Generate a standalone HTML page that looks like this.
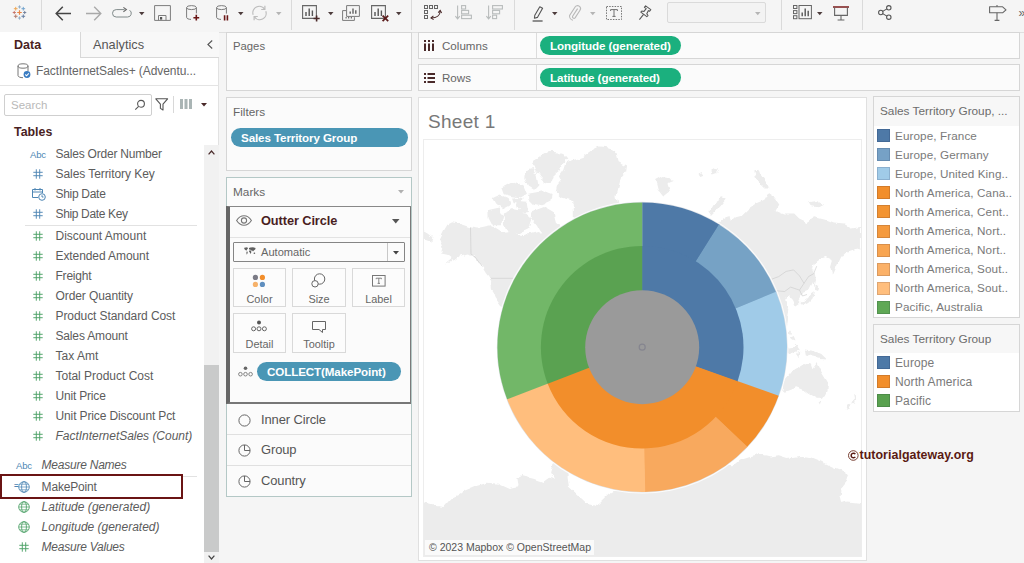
<!DOCTYPE html>
<html>
<head>
<meta charset="utf-8">
<title>Tableau - Sheet 1</title>
<style>
*{box-sizing:border-box;margin:0;padding:0}
html,body{width:1024px;height:563px;overflow:hidden}
body{font-family:"Liberation Sans",sans-serif;background:#f5f5f5;color:#555;font-size:12px;position:relative}
.abs{position:absolute}
.t{position:absolute;white-space:nowrap;line-height:1}
/* toolbar */
#toolbar{left:0;top:0;width:1024px;height:33px;background:#f5f5f5;border-bottom:1px solid #dfdfdf}
.vsep{position:absolute;top:0;width:1px;height:30px;background:#dadada}
/* left panel */
#left{left:0;top:32px;width:219px;height:531px;background:#fff;border-right:1px solid #e2e2e2}
.card{position:absolute;background:#fbfbfb;border:1px solid #d6d6d6}
.f{position:absolute;white-space:nowrap;font-size:12px;color:#5c5c5c;line-height:14px;letter-spacing:-0.1px}
.fi{font-style:italic}
.pill{position:absolute;border-radius:10px;color:#fff;font-weight:bold;font-size:12px;line-height:18px;white-space:nowrap;padding-left:11px;letter-spacing:-0.1px}
.lg{position:absolute;white-space:nowrap;font-size:11.7px;color:#7a7a7a;line-height:14px;letter-spacing:0.1px}
.sw{position:absolute;width:13px;height:13px;box-shadow:inset 0 0 0 1px rgba(0,0,40,0.13)}
svg{position:absolute;overflow:visible}
</style>
</head>
<body>

<!-- ================= TOOLBAR ================= -->
<div id="toolbar" class="abs">
  <div class="vsep" style="left:41px"></div>
  <div class="vsep" style="left:291px"></div>
  <div class="vsep" style="left:411px"></div>
  <div class="vsep" style="left:514px"></div>
  <div class="vsep" style="left:781px"></div>
  <div class="vsep" style="left:862px"></div>
</div>
<!--TOOLBAR-ICONS-->
<svg style="left:11.5px;top:5.2px;opacity:0.88" width="15" height="15" viewBox="0 0 17 17" fill="none"><path d="M5.9 8.5H11.1M8.5 5.9V11.1" stroke="#e8762c" stroke-width="1.4"/><path d="M6.7 2.2H10.3M8.5 0.40000000000000013V4.0" stroke="#7b9fbf" stroke-width="1.0"/><path d="M6.7 14.8H10.3M8.5 13.0V16.6" stroke="#7b9fbf" stroke-width="1.0"/><path d="M0.8 8.5H4.4M2.6 6.7V10.3" stroke="#c05a4a" stroke-width="1.0"/><path d="M12.6 8.5H16.2M14.4 6.7V10.3" stroke="#5a6b8a" stroke-width="1.0"/><path d="M2.1 4.2H6.300000000000001M4.2 2.1V6.300000000000001" stroke="#eb9b3c" stroke-width="1.1"/><path d="M10.700000000000001 4.2H14.9M12.8 2.1V6.300000000000001" stroke="#5c95c6" stroke-width="1.1"/><path d="M2.1 12.8H6.300000000000001M4.2 10.700000000000001V14.9" stroke="#a96b5a" stroke-width="1.1"/><path d="M10.700000000000001 12.8H14.9M12.8 10.700000000000001V14.9" stroke="#4d6a94" stroke-width="1.1"/></svg>
<svg style="left:55px;top:5.5px" width="16" height="15" viewBox="0 0 16 15" fill="none" stroke="#444" stroke-width="1.5"><path d="M16 7.5H1.2M7.8 0.8L1.2 7.5L7.8 14.2"/></svg>
<svg style="left:85.5px;top:5.5px" width="16" height="15" viewBox="0 0 16 15" fill="none" stroke="#a9a9a9" stroke-width="1.4"><path d="M0 7.5H14.8M8.2 0.8L14.8 7.5L8.2 14.2"/></svg>
<svg style="left:112px;top:6.5px" width="20" height="11" viewBox="0 0 20 11" fill="none" stroke="#808a8a" stroke-width="1"><path d="M12.6 2.6H4.2A3.7 3.7 0 0 0 4.2 10H15.6A3.7 3.7 0 0 0 17.6 3.2"/><path d="M11.4 0.4L14.4 2.6L11.4 4.8" stroke="#666" stroke-width="1.1"/></svg>
<svg style="left:138.95px;top:11.6px" width="5.5" height="3.2" viewBox="0 0 5.5 3.2"><path d="M0 0H5.5L2.75 3.2Z" fill="#4d3c3c"/></svg>
<svg style="left:154px;top:5px" width="17" height="16" viewBox="0 0 17 16" fill="none" stroke="#7d7d7d" stroke-width="1"><path d="M0.6 0.6H16.4V15.4H0.6Z"/><path d="M4.5 15.4V10.5H12V15.4"/><rect x="6" y="12" width="2.2" height="2.6" fill="#555" stroke="none"/></svg>
<svg style="left:186px;top:5px" width="14" height="16" viewBox="0 0 14 16" fill="none" stroke="#7d7d7d" stroke-width="1"><ellipse cx="5.5" cy="2.6" rx="4.9" ry="2"/><path d="M0.6 2.6V12.4C0.6 13.5 2.6 14.4 5 14.4M10.4 2.6V8.4"/><path d="M10.3 9.8V15.6M7.4 12.7H13.2" stroke="#6a1616" stroke-width="1.6"/></svg>
<svg style="left:215.5px;top:5px" width="13" height="16" viewBox="0 0 13 16" fill="none" stroke="#7d7d7d" stroke-width="1"><ellipse cx="5.5" cy="2.6" rx="4.9" ry="2"/><path d="M0.6 2.6V12.4C0.6 13.5 2.6 14.4 5 14.4M10.4 2.6V8.6"/><path d="M8.6 10.2V15.6M11.4 10.2V15.6" stroke="#6a1616" stroke-width="1.6"/></svg>
<svg style="left:237.95px;top:11.6px" width="5.5" height="3.2" viewBox="0 0 5.5 3.2"><path d="M0 0H5.5L2.75 3.2Z" fill="#4d3c3c"/></svg>
<svg style="left:250.5px;top:4.5px" width="17" height="16" viewBox="0 0 17 16" fill="none" stroke="#bdbdbd" stroke-width="1.2"><path d="M2.2 9.8A6.4 6.4 0 0 1 13.6 4.2"/><path d="M14.8 6.2A6.4 6.4 0 0 1 3.4 11.8"/><path d="M13.9 0.8V4.5H10.2" /><path d="M3.1 15.2V11.5H6.8"/></svg>
<svg style="left:276.25px;top:11.6px" width="5.5" height="3.2" viewBox="0 0 5.5 3.2"><path d="M0 0H5.5L2.75 3.2Z" fill="#b5b5b5"/></svg>
<svg style="left:301.5px;top:4.5px" width="19" height="17" viewBox="0 0 19 17" fill="none" stroke="#666" stroke-width="1.1"><path d="M0.6 0.6H14.4V13.4H0.6Z"/><path d="M4 11V7M7.2 11V3.4M10.4 11V5.6" stroke="#555" stroke-width="1.4"/><path d="M14.6 10.4V16.6M11.5 13.5H17.7" stroke="#4a2a2a" stroke-width="1.6"/></svg>
<svg style="left:327.75px;top:11.6px" width="5.5" height="3.2" viewBox="0 0 5.5 3.2"><path d="M0 0H5.5L2.75 3.2Z" fill="#4d3c3c"/></svg>
<svg style="left:342px;top:4.5px" width="18" height="17" viewBox="0 0 18 17" fill="none" stroke="#7a7a7a" stroke-width="1"><path d="M4.4 5.6H0.6V15.4H12.4V12.2"/><path d="M3.6 12.8H4.6M6.2 12.8H7.2M8.8 12.8H9.8" stroke="#555" stroke-width="1.6"/><path d="M4.6 0.6H17.4V11.4H4.6Z" fill="#f5f5f5"/><path d="M8.2 8.8V6.4M11 8.8V3.6M13.8 8.8V5.2" stroke="#555" stroke-width="1.3"/></svg>
<svg style="left:371px;top:4.5px" width="19" height="17" viewBox="0 0 19 17" fill="none" stroke="#666" stroke-width="1.1"><path d="M0.6 0.6H14.4V13.4H0.6Z"/><path d="M4 11V7M7.2 11V3.4M10.4 11V5.6" stroke="#555" stroke-width="1.4"/><path d="M11.6 10.6L17.2 16.2M17.2 10.6L11.6 16.2" stroke="#5a1a1a" stroke-width="1.7"/></svg>
<svg style="left:396.25px;top:11.6px" width="5.5" height="3.2" viewBox="0 0 5.5 3.2"><path d="M0 0H5.5L2.75 3.2Z" fill="#4d3c3c"/></svg>
<svg style="left:424px;top:5px" width="18" height="15" viewBox="0 0 18 15" fill="none" stroke="#666" stroke-width="1"><rect x="0.5" y="0.5" width="3" height="3"/><rect x="5.5" y="0.5" width="3" height="3"/><rect x="10.5" y="0.5" width="3" height="3"/><rect x="0.5" y="5.5" width="3" height="3"/><rect x="0.5" y="10.5" width="3" height="3"/><path d="M16.2 5.8C16.2 10.5 12.5 13 7.4 13" stroke="#4a2a2a" stroke-width="1.1"/><path d="M14.2 7.6L16.2 5.4L17.6 8M9.4 10.9L7 13L9.6 14.6" stroke="#4a2a2a" stroke-width="1.1"/></svg>
<svg style="left:455px;top:5px" width="17" height="15" viewBox="0 0 17 15" fill="none" stroke="#b8bcbc" stroke-width="1.1"><path d="M2.6 0.6V13.6M0.4 11.2L2.6 13.8L4.8 11.2"/><rect x="6.6" y="0.6" width="4" height="3.4"/><rect x="6.6" y="5.4" width="7" height="3.4"/><rect x="6.6" y="10.2" width="9.8" height="3.4"/></svg>
<svg style="left:485.5px;top:5px" width="17" height="15" viewBox="0 0 17 15" fill="none" stroke="#b8bcbc" stroke-width="1.1"><path d="M2.6 0.6V13.6M0.4 11.2L2.6 13.8L4.8 11.2"/><rect x="6.6" y="0.6" width="9.8" height="3.4"/><rect x="6.6" y="5.4" width="7" height="3.4"/><rect x="6.6" y="10.2" width="4" height="3.4"/></svg>
<svg style="left:532px;top:5.5px" width="12" height="16" viewBox="0 0 12 16" fill="none" stroke="#555" stroke-width="1.1"><path d="M7.8 0.8L10.6 2.2L5.4 11.4L2.4 12.2L2.8 9.2Z" stroke-linejoin="round"/><path d="M0.6 15H10.6" stroke-width="1.3"/></svg>
<svg style="left:551.75px;top:11.6px" width="5.5" height="3.2" viewBox="0 0 5.5 3.2"><path d="M0 0H5.5L2.75 3.2Z" fill="#4d3c3c"/></svg>
<svg style="left:568px;top:5px" width="13" height="16" viewBox="0 0 13 16" fill="none" stroke="#b8b8b8" stroke-width="1.1"><path d="M9.6 3.6L4.6 11.2A1.5 1.5 0 0 0 7.1 12.8L12 5.2A2.9 2.9 0 0 0 7.1 2L1.6 10.4A4.2 4.2 0 0 0 5 15.2"/></svg>
<svg style="left:589.75px;top:11.6px" width="5.5" height="3.2" viewBox="0 0 5.5 3.2"><path d="M0 0H5.5L2.75 3.2Z" fill="#b5b5b5"/></svg>
<svg style="left:606px;top:5.5px" width="16" height="14" viewBox="0 0 16 14" fill="none" stroke="#777" stroke-width="1"><rect x="0.5" y="0.5" width="15" height="13" stroke-dasharray="1.5 1.2"/><path d="M4.6 3.6H11.4M4.6 3.6V5M11.4 3.6V5M8 3.6V10.4M6.4 10.4H9.6" stroke="#707070" stroke-width="1"/></svg>
<svg style="left:637.5px;top:5px" width="14" height="16" viewBox="0 0 14 16" fill="none" stroke="#555" stroke-width="1.05" stroke-linejoin="round"><path d="M7.6 0.8L12.8 4.6L11.6 6.2L10.4 5.6L8.8 8.8L10 10.6L8.8 11.6L2.8 7.2L3.8 6L6 6.4L8.2 3.6L6.4 2.4Z"/><path d="M5.6 9.4L1.4 14.6"/></svg>
<div class="abs" style="left:667px;top:2px;width:99px;height:21px;background:#f3f3f3;border:1px solid #dadada;border-radius:2px"></div>
<svg style="left:754.95px;top:11.6px" width="5.5" height="3.2" viewBox="0 0 5.5 3.2"><path d="M0 0H5.5L2.75 3.2Z" fill="#b5b5b5"/></svg>
<svg style="left:793px;top:5px" width="19" height="15" viewBox="0 0 19 15" fill="none" stroke="#666" stroke-width="1"><rect x="0.5" y="0.5" width="3.4" height="3"/><rect x="0.5" y="5.6" width="3.4" height="3"/><rect x="0.5" y="10.7" width="3.4" height="3"/><rect x="6" y="0.5" width="12.4" height="13.2"/><path d="M9.2 11.2V7.6M12.2 11.2V3.4M15.2 11.2V5.8" stroke="#555" stroke-width="1.4"/></svg>
<svg style="left:816.95px;top:11.6px" width="5.5" height="3.2" viewBox="0 0 5.5 3.2"><path d="M0 0H5.5L2.75 3.2Z" fill="#4d3c3c"/></svg>
<svg style="left:833px;top:5.5px" width="16" height="15" viewBox="0 0 16 15" fill="none" stroke="#666" stroke-width="1.1"><path d="M0 1H16" stroke="#7a1a1a" stroke-width="1.5"/><path d="M1.6 1.6V9.4H14.4V1.6"/><path d="M8 9.4V13.6M4.6 14H11.4"/></svg>
<svg style="left:878px;top:5px" width="14" height="15" viewBox="0 0 14 15" fill="none" stroke="#555" stroke-width="1.1"><circle cx="10.8" cy="2.8" r="2.2"/><circle cx="2.8" cy="7.5" r="2.2"/><circle cx="10.8" cy="12.2" r="2.2"/><path d="M4.7 6.4L8.9 3.9M4.7 8.6L8.9 11.1"/></svg>
<svg style="left:989px;top:5px" width="18" height="16" viewBox="0 0 18 16" fill="none" stroke="#666" stroke-width="1.1"><path d="M0.6 1.8H13.6L17 4.8L13.6 7.8H0.6Z" stroke-linejoin="round"/><path d="M8 0V1.8M8 7.8V15M5.6 15.4H10.4"/></svg>
<div class="t" style="left:1018.5px;top:7px;font-size:12px;color:#666">»</div>
<!--/TOOLBAR-ICONS-->

<!-- ================= LEFT DATA PANEL ================= -->
<div id="left" class="abs"></div>
<!--LEFT-CONTENT-->
<div class="abs" style="left:80px;top:32px;width:139px;height:26px;background:#f8f8f8;border-left:1px solid #d8d8d8;border-bottom:1px solid #d8d8d8"></div>
<div class="t" style="left:14px;top:39px;font-size:12.5px;font-weight:bold;color:#4a1f1f">Data</div>
<div class="t" style="left:93px;top:39px;font-size:12.75px;color:#555">Analytics</div>
<svg style="left:206.5px;top:40px" width="6" height="9" viewBox="0 0 6 9" fill="none" stroke="#555" stroke-width="1.1"><path d="M5.2 0.5L0.9 4.5L5.2 8.5"/></svg>
<svg style="left:17px;top:63px" width="14" height="16" viewBox="0 0 14 16" fill="none" stroke="#777" stroke-width="1"><ellipse cx="6" cy="3" rx="5" ry="2.2"/><path d="M1 3V12.5C1 13.8 3.2 14.7 6 14.7M11 3V8"/><circle cx="10" cy="11.5" r="3.4" fill="#3a7cc2" stroke="none"/><path d="M8.3 11.5L9.6 12.8L11.8 10.3" stroke="#fff" stroke-width="1.1"/></svg>
<div class="t" style="left:36px;top:65px;font-size:12px;color:#666;letter-spacing:-0.08px">FactInternetSales+ (Adventu...</div>
<div class="abs" style="left:0;top:85px;width:219px;height:1px;background:#e4e4e4"></div>
<div class="abs" style="left:4px;top:94px;width:148px;height:22px;background:#fff;border:1px solid #cfcfcf;border-radius:2px"></div>
<div class="t" style="left:11px;top:100px;font-size:11.5px;color:#b9b9b9">Search</div>
<svg style="left:134px;top:99px" width="12" height="12" viewBox="0 0 12 12" fill="none" stroke="#555" stroke-width="1.1"><circle cx="7" cy="4.8" r="3.4"/><path d="M4.6 7.3L1.3 10.6"/></svg>
<svg style="left:155px;top:98px" width="14" height="13" viewBox="0 0 14 13" fill="none" stroke="#555" stroke-width="1.1"><path d="M0.8 0.8H12.6L8 6.2V12L5.4 10.4V6.2Z" stroke-linejoin="round"/></svg>
<div class="abs" style="left:173px;top:96px;width:1px;height:17px;background:#d8d8d8"></div>
<svg style="left:180px;top:99px" width="12" height="10" viewBox="0 0 12 10" fill="#aab5b5" stroke="none"><rect x="0" y="0" width="3" height="10"/><rect x="4.5" y="0" width="3" height="10"/><rect x="9" y="0" width="3" height="10"/></svg>
<svg style="left:200.5px;top:102.5px" width="6" height="4" viewBox="0 0 6 4"><path d="M0 0H6L3 3.6Z" fill="#4a2a2a"/></svg>
<div class="t" style="left:14px;top:126px;font-size:12.4px;font-weight:bold;color:#4a1f1f">Tables</div>
<div class="t" style="left:30px;top:149.5px;font-size:9.5px;color:#4e86b4;letter-spacing:-0.2px">Abc</div>
<div class="f" style="left:55.5px;top:147px;letter-spacing:-0.211px">Sales Order Number</div>
<svg style="left:33px;top:169px" width="10" height="10" viewBox="0 0 10 10" fill="none" stroke="#4e86b4" stroke-width="0.95"><path d="M3.3 0.3V9.7M6.7 0.3V9.7M0.3 3.3H9.7M0.3 6.7H9.7"/></svg>
<div class="f" style="left:55.5px;top:167px;letter-spacing:-0.068px">Sales Territory Key</div>
<svg style="left:31.5px;top:188px" width="14" height="13" viewBox="0 0 14 13" fill="none" stroke="#4e86b4" stroke-width="1"><path d="M6 9.5H0.5V1.5H10.5V5"/><path d="M0.5 4H10.5M3 0V2.5M8 0V2.5"/><circle cx="10" cy="9" r="3.3" fill="#fff"/><path d="M10 7.2V9H11.5"/></svg>
<div class="f" style="left:55.5px;top:187px;letter-spacing:-0.3px">Ship Date</div>
<svg style="left:33px;top:209px" width="10" height="10" viewBox="0 0 10 10" fill="none" stroke="#4e86b4" stroke-width="0.95"><path d="M3.3 0.3V9.7M6.7 0.3V9.7M0.3 3.3H9.7M0.3 6.7H9.7"/></svg>
<div class="f" style="left:55.5px;top:207px;letter-spacing:-0.346px">Ship Date Key</div>
<svg style="left:33px;top:231px" width="10" height="10" viewBox="0 0 10 10" fill="none" stroke="#4da167" stroke-width="0.95"><path d="M3.3 0.3V9.7M6.7 0.3V9.7M0.3 3.3H9.7M0.3 6.7H9.7"/></svg>
<div class="f" style="left:55.5px;top:229px;letter-spacing:0.0px">Discount Amount</div>
<svg style="left:33px;top:251px" width="10" height="10" viewBox="0 0 10 10" fill="none" stroke="#4da167" stroke-width="0.95"><path d="M3.3 0.3V9.7M6.7 0.3V9.7M0.3 3.3H9.7M0.3 6.7H9.7"/></svg>
<div class="f" style="left:55.5px;top:249px;letter-spacing:-0.087px">Extended Amount</div>
<svg style="left:33px;top:271px" width="10" height="10" viewBox="0 0 10 10" fill="none" stroke="#4da167" stroke-width="0.95"><path d="M3.3 0.3V9.7M6.7 0.3V9.7M0.3 3.3H9.7M0.3 6.7H9.7"/></svg>
<div class="f" style="left:55.5px;top:269px;letter-spacing:-0.214px">Freight</div>
<svg style="left:33px;top:291px" width="10" height="10" viewBox="0 0 10 10" fill="none" stroke="#4da167" stroke-width="0.95"><path d="M3.3 0.3V9.7M6.7 0.3V9.7M0.3 3.3H9.7M0.3 6.7H9.7"/></svg>
<div class="f" style="left:55.5px;top:289px;letter-spacing:-0.086px">Order Quantity</div>
<svg style="left:33px;top:311px" width="10" height="10" viewBox="0 0 10 10" fill="none" stroke="#4da167" stroke-width="0.95"><path d="M3.3 0.3V9.7M6.7 0.3V9.7M0.3 3.3H9.7M0.3 6.7H9.7"/></svg>
<div class="f" style="left:55.5px;top:309px;letter-spacing:-0.076px">Product Standard Cost</div>
<svg style="left:33px;top:331px" width="10" height="10" viewBox="0 0 10 10" fill="none" stroke="#4da167" stroke-width="0.95"><path d="M3.3 0.3V9.7M6.7 0.3V9.7M0.3 3.3H9.7M0.3 6.7H9.7"/></svg>
<div class="f" style="left:55.5px;top:329px;letter-spacing:-0.158px">Sales Amount</div>
<svg style="left:33px;top:351px" width="10" height="10" viewBox="0 0 10 10" fill="none" stroke="#4da167" stroke-width="0.95"><path d="M3.3 0.3V9.7M6.7 0.3V9.7M0.3 3.3H9.7M0.3 6.7H9.7"/></svg>
<div class="f" style="left:55.5px;top:349px;letter-spacing:0.043px">Tax Amt</div>
<svg style="left:33px;top:371px" width="10" height="10" viewBox="0 0 10 10" fill="none" stroke="#4da167" stroke-width="0.95"><path d="M3.3 0.3V9.7M6.7 0.3V9.7M0.3 3.3H9.7M0.3 6.7H9.7"/></svg>
<div class="f" style="left:55.5px;top:369px;letter-spacing:-0.017px">Total Product Cost</div>
<svg style="left:33px;top:391px" width="10" height="10" viewBox="0 0 10 10" fill="none" stroke="#4da167" stroke-width="0.95"><path d="M3.3 0.3V9.7M6.7 0.3V9.7M0.3 3.3H9.7M0.3 6.7H9.7"/></svg>
<div class="f" style="left:55.5px;top:389px;letter-spacing:-0.19px">Unit Price</div>
<svg style="left:33px;top:411px" width="10" height="10" viewBox="0 0 10 10" fill="none" stroke="#4da167" stroke-width="0.95"><path d="M3.3 0.3V9.7M6.7 0.3V9.7M0.3 3.3H9.7M0.3 6.7H9.7"/></svg>
<div class="f" style="left:55.5px;top:409px;letter-spacing:-0.126px">Unit Price Discount Pct</div>
<svg style="left:33px;top:431px" width="10" height="10" viewBox="0 0 10 10" fill="none" stroke="#4da167" stroke-width="0.95"><path d="M3.3 0.3V9.7M6.7 0.3V9.7M0.3 3.3H9.7M0.3 6.7H9.7"/></svg>
<div class="f fi" style="left:55.5px;top:429px;letter-spacing:-0.028px">FactInternetSales (Count)</div>
<div class="abs" style="left:25px;top:225px;width:172px;height:1px;background:#e2e2e2"></div>
<div class="t" style="left:16px;top:460.5px;font-size:9.5px;color:#4e86b4;letter-spacing:-0.2px">Abc</div>
<div class="f fi" style="left:41.6px;top:458px;letter-spacing:-0.238px">Measure Names</div>
<div class="abs" style="left:183px;top:476px;width:14px;height:1px;background:#e2e2e2"></div>
<div class="abs" style="left:0px;top:474px;width:183px;height:25px;border:2px solid #6a1414;background:#fff"></div>
<div class="t" style="left:14px;top:482px;font-size:8px;color:#4e86b4;font-weight:bold">=</div>
<svg style="left:18px;top:481px" width="12" height="12" viewBox="0 0 12 12" fill="none" stroke="#4e86b4" stroke-width="0.85"><circle cx="6" cy="6" r="5.3"/><ellipse cx="6" cy="6" rx="2.4" ry="5.3"/><path d="M0.7 6H11.3M1.7 3.2H10.3M1.7 8.8H10.3" stroke-width="0.7"/></svg>
<div class="f" style="left:41.6px;top:480px;letter-spacing:-0.189px">MakePoint</div>
<svg style="left:18px;top:501px" width="12" height="12" viewBox="0 0 12 12" fill="none" stroke="#4da167" stroke-width="0.85"><circle cx="6" cy="6" r="5.3"/><ellipse cx="6" cy="6" rx="2.4" ry="5.3"/><path d="M0.7 6H11.3M1.7 3.2H10.3M1.7 8.8H10.3" stroke-width="0.7"/></svg>
<div class="f fi" style="left:41.6px;top:500px;letter-spacing:0.025px">Latitude (generated)</div>
<svg style="left:18px;top:521px" width="12" height="12" viewBox="0 0 12 12" fill="none" stroke="#4da167" stroke-width="0.85"><circle cx="6" cy="6" r="5.3"/><ellipse cx="6" cy="6" rx="2.4" ry="5.3"/><path d="M0.7 6H11.3M1.7 3.2H10.3M1.7 8.8H10.3" stroke-width="0.7"/></svg>
<div class="f fi" style="left:41.6px;top:520px;letter-spacing:-0.01px">Longitude (generated)</div>
<svg style="left:19px;top:542px" width="10" height="10" viewBox="0 0 10 10" fill="none" stroke="#4da167" stroke-width="0.95"><path d="M3.3 0.3V9.7M6.7 0.3V9.7M0.3 3.3H9.7M0.3 6.7H9.7"/></svg>
<div class="f fi" style="left:41.6px;top:540px;letter-spacing:-0.236px">Measure Values</div>
<div class="abs" style="left:204px;top:145px;width:15px;height:418px;background:#f1f1f1"></div>
<div class="abs" style="left:204px;top:365px;width:15px;height:187px;background:#c9caca"></div>
<svg style="left:208px;top:150px" width="7" height="5" viewBox="0 0 7 5" fill="none" stroke="#4a2a2a" stroke-width="1.2"><path d="M0.6 4.4L3.5 1L6.4 4.4"/></svg>
<svg style="left:208px;top:555px" width="7" height="5" viewBox="0 0 7 5" fill="none" stroke="#444" stroke-width="1.2"><path d="M0.6 0.6L3.5 4L6.4 0.6"/></svg>
<!--/LEFT-CONTENT-->

<!-- ================= MIDDLE CARDS ================= -->
<!--MIDDLE-CONTENT-->
<div class="card" style="left:226px;top:32px;width:186px;height:59px"></div>
<div class="t" style="left:233px;top:41px;font-size:11.3px;color:#666">Pages</div>
<div class="card" style="left:226px;top:97px;width:186px;height:74px"></div>
<div class="t" style="left:233px;top:106.6px;font-size:11.8px;color:#666">Filters</div>
<div class="pill" style="left:231px;top:128px;width:177px;height:19px;background:#4a96b5;padding-left:10px;line-height:19px;font-size:11.6px">Sales Territory Group</div>
<div class="card" style="left:226px;top:177px;width:186px;height:320px;border-color:#b4c8c6"></div>
<div class="t" style="left:233px;top:186.6px;font-size:11.8px;color:#666">Marks</div>
<svg style="left:398px;top:189.5px" width="6" height="3.6" viewBox="0 0 6 3.6"><path d="M0 0H6L3 3.6Z" fill="#b0b0b0"/></svg>
<div class="abs" style="left:226px;top:206px;width:185px;height:198px;background:#fbfbfb;border:1px solid #7a7a7a;border-left:4px solid #666;border-top:1.5px solid #888;border-bottom:2px solid #777"></div>
<svg style="left:236px;top:215px" width="16" height="11" viewBox="0 0 16 11" fill="none" stroke="#777" stroke-width="1.1"><path d="M0.6 5.5C3 1.8 5.5 0.8 8 0.8S13 1.8 15.4 5.5C13 9.2 10.5 10.2 8 10.2S3 9.2 0.6 5.5Z"/><circle cx="8" cy="5.5" r="2.6"/></svg>
<div class="t" style="left:261px;top:215px;font-size:12.8px;font-weight:bold;color:#4a1f1f;letter-spacing:-0.1px">Outter Circle</div>
<svg style="left:392px;top:218.5px" width="7.5" height="4.6" viewBox="0 0 7.5 4.6"><path d="M0 0H7.5L3.75 4.6Z" fill="#555"/></svg>
<div class="abs" style="left:230px;top:237px;width:180px;height:1px;background:#e3e3e3"></div>
<div class="abs" style="left:233px;top:242px;width:172px;height:20px;background:#fbfbfb;border:1px solid #858585;border-radius:1px"></div>
<div class="abs" style="left:387px;top:243px;width:1px;height:18px;background:#c8c8c8"></div>
<svg style="left:243.5px;top:247px" width="12" height="9" viewBox="0 0 12 9" fill="#5f5f5f"><path d="M0.3 0.8L3.2 0.3L4 1.4L3 2.6L2.4 3.8L1.4 3L0.3 2Z"/><path d="M2.6 4.4L3.8 4.8L3.4 6.6L2.8 7.8L2.4 6Z"/><path d="M5 1L6.4 0.4L9 0.3L11.6 0.9L11.2 2.6L9.8 3.4L9 4.6L8.2 3.4L7 3.4L6.2 2.6L5 2.6Z"/><path d="M5.2 3.4L6.8 3.6L7.4 5L6.6 7L5.8 5.6L5 4.6Z"/><path d="M9.6 5.8L11 5.6L11.2 6.8L9.8 7Z"/></svg>
<div class="t" style="left:261px;top:246.8px;font-size:11.1px;color:#666">Automatic</div>
<svg style="left:393px;top:250.5px" width="6" height="3.6" viewBox="0 0 6 3.6"><path d="M0 0H6L3 3.6Z" fill="#444"/></svg>
<div class="abs" style="left:233px;top:268px;width:53px;height:39px;background:#fcfcfc;border:1px solid #d9d9d9"></div>
<div class="t" style="left:233px;top:294px;width:53px;text-align:center;font-size:10.9px;color:#666">Color</div>
<svg style="left:252px;top:274px" width="14" height="14" viewBox="0 0 14 14"><circle cx="3.4" cy="3.4" r="2.6" fill="#7b7b86"/><circle cx="10.4" cy="3.4" r="2.6" fill="#f28e2b"/><circle cx="3.4" cy="10.4" r="2.6" fill="#f6b26b"/><circle cx="10.4" cy="10.4" r="2.6" fill="#5f8fbf"/></svg>
<div class="abs" style="left:292px;top:268px;width:54px;height:39px;background:#fcfcfc;border:1px solid #d9d9d9"></div>
<div class="t" style="left:292px;top:294px;width:54px;text-align:center;font-size:10.9px;color:#666">Size</div>
<svg style="left:311px;top:273px" width="15" height="15" viewBox="0 0 15 15" fill="none" stroke="#666" stroke-width="1"><circle cx="8.6" cy="6" r="5.2"/><circle cx="4" cy="10.8" r="3.2" fill="#fcfcfc"/></svg>
<div class="abs" style="left:352px;top:268px;width:53px;height:39px;background:#fcfcfc;border:1px solid #d9d9d9"></div>
<div class="t" style="left:352px;top:294px;width:53px;text-align:center;font-size:10.9px;color:#666">Label</div>
<svg style="left:372px;top:275px" width="14" height="12" viewBox="0 0 14 12" fill="none" stroke="#777" stroke-width="1"><rect x="0.5" y="0.5" width="12.6" height="10.6"/><path d="M4.2 3.2H9.4M4.2 3.2V4.2M9.4 3.2V4.2M6.8 3.2V8.4M5.6 8.4H8" stroke-width="0.9"/></svg>
<div class="abs" style="left:233px;top:313px;width:53px;height:40px;background:#fcfcfc;border:1px solid #d9d9d9"></div>
<div class="t" style="left:233px;top:339px;width:53px;text-align:center;font-size:10.9px;color:#666">Detail</div>
<svg style="left:251px;top:320px" width="16" height="12" viewBox="0 0 16 12" fill="none" stroke="#666" stroke-width="1"><circle cx="8" cy="2.4" r="2" fill="#555" stroke="none"/><circle cx="2.6" cy="8.8" r="2"/><circle cx="8" cy="8.8" r="2"/><circle cx="13.4" cy="8.8" r="2"/></svg>
<div class="abs" style="left:292px;top:313px;width:54px;height:40px;background:#fcfcfc;border:1px solid #d9d9d9"></div>
<div class="t" style="left:292px;top:339px;width:54px;text-align:center;font-size:10.9px;color:#666">Tooltip</div>
<svg style="left:312px;top:321px" width="14" height="12" viewBox="0 0 14 12" fill="none" stroke="#666" stroke-width="1"><path d="M0.5 0.5H13.5V8.5H10.5V11.5L7 8.5H0.5Z" stroke-linejoin="round"/></svg>
<svg style="left:238px;top:366px" width="15" height="11" viewBox="0 0 15 11" fill="none" stroke="#777" stroke-width="0.9"><circle cx="7.5" cy="2.2" r="1.8" fill="#666" stroke="none"/><circle cx="2.4" cy="8.2" r="1.8"/><circle cx="7.5" cy="8.2" r="1.8"/><circle cx="12.6" cy="8.2" r="1.8"/></svg>
<div class="pill" style="left:257px;top:362px;width:144px;height:19px;background:#4a96b5;padding-left:10px;line-height:19px;font-size:11.6px">COLLECT(MakePoint)</div>
<svg style="left:238px;top:413.5px" width="13" height="13" viewBox="0 0 13 13" fill="none" stroke="#666" stroke-width="1"><circle cx="6.5" cy="6.5" r="5.6"/></svg>
<div class="t" style="left:261px;top:414px;font-size:12.95px;color:#555;letter-spacing:-0.1px">Inner Circle</div>
<svg style="left:238px;top:443.5px" width="13" height="13" viewBox="0 0 13 13" fill="none" stroke="#666" stroke-width="1"><circle cx="6.5" cy="6.5" r="5.6"/><path d="M6.5 1V6.5H12"/></svg>
<div class="t" style="left:261px;top:444px;font-size:12.95px;color:#555;letter-spacing:-0.1px">Group</div>
<svg style="left:238px;top:474.5px" width="13" height="13" viewBox="0 0 13 13" fill="none" stroke="#666" stroke-width="1"><circle cx="6.5" cy="6.5" r="5.6"/><path d="M6.5 1V6.5H12"/></svg>
<div class="t" style="left:261px;top:475px;font-size:12.95px;color:#555;letter-spacing:-0.1px">Country</div>
<div class="abs" style="left:227px;top:434px;width:184px;height:1px;background:#e0e0e0"></div>
<div class="abs" style="left:227px;top:465px;width:184px;height:1px;background:#e0e0e0"></div>
<!--/MIDDLE-CONTENT-->

<!-- ================= SHELVES ================= -->
<!--SHELVES-->
<div class="card" style="left:418px;top:32px;width:602px;height:27px"></div>
<div class="abs" style="left:536px;top:33px;width:1px;height:25px;background:#dcdcdc"></div>
<svg style="left:424px;top:39.6px" width="10" height="11" viewBox="0 0 10 11" fill="#4a2a2a"><rect x="0" y="0" width="2" height="2"/><rect x="4" y="0" width="2" height="2"/><rect x="8" y="0" width="2" height="2"/><rect x="0" y="3.5" width="2" height="7.5"/><rect x="4" y="3.5" width="2" height="7.5"/><rect x="8" y="3.5" width="2" height="7.5"/></svg>
<div class="t" style="left:442px;top:39.6px;font-size:11.6px;color:#666">Columns</div>
<div class="pill" style="left:540px;top:36px;width:141px;height:19px;background:#1bb07e;padding-left:10px;line-height:19px;font-size:11.65px">Longitude (generated)</div>
<div class="card" style="left:418px;top:64px;width:602px;height:27px"></div>
<div class="abs" style="left:536px;top:65px;width:1px;height:25px;background:#dcdcdc"></div>
<svg style="left:424px;top:72.6px" width="11" height="10" viewBox="0 0 11 10" fill="#4a2a2a"><rect x="0" y="0" width="2" height="2"/><rect x="0" y="4" width="2" height="2"/><rect x="0" y="8" width="2" height="2"/><rect x="3.5" y="0" width="7.5" height="2"/><rect x="3.5" y="4" width="7.5" height="2"/><rect x="3.5" y="8" width="7.5" height="2"/></svg>
<div class="t" style="left:442px;top:71.6px;font-size:11.6px;color:#666">Rows</div>
<div class="pill" style="left:540px;top:68px;width:141px;height:19px;background:#1bb07e;padding-left:10px;line-height:19px;font-size:11.65px">Latitude (generated)</div>
<!--/SHELVES-->

<!-- ================= VIZ ================= -->
<!--VIZ-->
<div class="card" style="left:418px;top:97px;width:449px;height:464px;background:#fff;border-color:#e0e0e0"></div>
<div class="t" style="left:428px;top:112px;font-size:19px;color:#787878;letter-spacing:0.3px">Sheet 1</div>
<div class="abs" style="left:423px;top:139px;width:439px;height:418px;border:1px solid #ededed;background:#fff"></div>
<svg style="left:424px;top:140px" width="437" height="416" viewBox="424 140 437 416"><defs><filter id="rough" x="-2%" y="-2%" width="104%" height="104%"><feTurbulence type="fractalNoise" baseFrequency="0.11" numOctaves="3" seed="7" result="n"/><feDisplacementMap in="SourceGraphic" in2="n" scale="5.5" xChannelSelector="R" yChannelSelector="G"/></filter><clipPath id="mc"><rect x="424" y="140" width="437" height="416"/></clipPath></defs><g clip-path="url(#mc)"><path d="M439.4 239.8L443.6 231.0L447.4 224.8L452.3 222.3L461.0 224.3L469.8 227.3L478.5 228.6L487.2 227.3L494.6 229.8L502.1 233.5L512.0 231.0L519.5 234.8L529.5 236.0L536.9 237.3L544.4 234.3L551.8 231.8L569.3 227.3L594.1 264.6L544.4 339.3L500.8 305.7L494.6 297.0L492.1 289.5L490.9 279.6L485.9 273.3L482.2 267.1L478.5 260.9L473.5 255.2L467.3 253.4L459.8 255.9L453.6 260.9L444.9 264.6L452.3 258.4L447.4 254.7L441.1 253.4L442.4 248.5Z M423.0 231.0L427.5 233.5L432.4 237.3L431.2 242.2L427.0 239.8L423.0 238.5Z M565.3 163.5L571.7 160.3L582.3 157.1L590.9 150.7L599.4 146.4L610.1 147.5L616.5 152.8L618.6 161.3L627.1 165.6L626.1 172.0L620.7 178.4L618.6 186.9L616.5 195.4L618.2 204.0L607.9 229.6L573.8 229.6L573.8 204.0L569.6 199.7L561.0 197.6L555.7 192.2L556.8 185.8L561.0 180.5L558.9 176.2L563.2 169.9Z M532.2 163.5L535.9 158.8L539.7 156.0L545.0 152.8L550.4 151.7L557.8 152.4L563.2 153.9L567.8 158.8L563.6 163.0L560.6 167.3L558.5 171.6L553.6 175.2L551.4 181.6L545.0 183.7L540.1 179.4L541.0 173.7L535.9 172.4Z M525.2 171.6L532.5 169.0L536.7 175.8L538.4 185.2L533.7 190.3L527.8 186.5L524.3 178.8Z M502.4 188.0L514.1 181.8L523.5 185.2L526.9 193.7L520.9 197.6L512.0 196.3L504.7 194.2Z M491.7 198.6L500.3 194.6L508.6 198.0L511.1 204.4L503.9 208.2L495.4 204.8Z M528.2 193.7L541.8 191.2L551.6 195.0L550.4 201.8L542.3 205.2L532.9 204.0L528.2 199.3Z M488.5 209.9L499.6 207.4L503.5 215.7L501.3 225.3L492.4 225.3L488.5 218.0Z M503.9 212.5L512.0 209.1L523.5 211.2L531.6 218.5L528.2 228.3L518.8 233.0L507.3 231.7L503.9 223.6Z M532.5 211.2L544.0 207.0L553.3 212.5L555.9 222.7L562.3 229.1L566.6 240.2L545.0 240.2L537.1 226.1L531.6 218.9Z M516.2 201.8L527.8 202.7L529.0 212.1L519.7 213.3Z M512.0 197.6L522.6 198.4L521.8 202.3L513.7 202.3Z M480.0 227.4L490.7 225.3L501.3 232.1L512.0 234.2L522.6 235.1L531.2 233.8L537.6 232.1L544.0 234.9L544.0 260.0L480.0 260.0Z M714.6 224.6L725.8 217.2L729.6 215.9L730.8 222.1L735.8 217.2L740.7 215.9L747.0 209.7L755.7 203.5L764.4 199.8L768.1 193.5L775.6 198.5L779.3 203.5L775.6 209.7L784.3 213.4L794.2 213.4L799.2 218.4L806.7 222.1L814.1 217.2L824.1 219.7L834.0 223.4L844.0 224.6L851.4 228.4L860.9 227.1L860.9 248.3L853.9 249.5L846.5 252.0L842.0 256.5L836.5 255.7L831.5 259.5L826.6 257.0L819.1 259.5L814.1 264.4L812.1 269.4L814.1 274.4L739.5 290.0L714.6 249.5Z M656.2 179.9L663.6 176.1L671.1 177.4L673.6 181.1L667.4 183.6L669.9 191.0L663.6 196.0L658.7 189.8Z M698.5 173.6L702.2 171.9L704.2 174.4L700.4 175.9Z M710.9 171.1L714.6 168.7L719.1 169.4L717.1 172.9L712.6 174.4Z M708.4 212.2L713.4 203.5L722.1 197.3L725.8 198.5L719.6 206.0L714.6 212.2L710.9 215.9Z M754.4 171.1L759.4 168.7L761.9 176.1L766.9 183.6L769.4 188.6L764.4 188.6L759.4 183.6L755.7 177.4Z M809.2 202.2L816.6 201.0L824.1 204.7L819.1 207.2L811.6 206.0Z M830.5 247.0L824.5 257.5L815.4 262.1L812.4 271.1L813.9 280.2L809.4 289.2L801.8 292.2L798.8 298.3L800.3 302.8L795.8 305.8L792.8 299.8L788.3 295.2L785.2 299.8L788.3 310.3L786.8 320.9L785.2 333.0L758.1 333.0L758.1 247.0Z M839.5 250.0L842.0 253.0L837.1 263.6L832.0 274.7L829.9 266.6L832.9 256.0Z M813.9 268.1L816.0 278.7L814.8 287.7L812.7 280.2Z M815.4 286.2L819.3 285.6L818.1 291.0L814.8 289.8Z M813.9 292.2L812.7 298.3L808.2 303.1L802.1 306.1L800.3 304.0L806.4 299.8L811.2 294.0Z M789.2 330.8L790.7 330.8L790.7 334.8L789.2 334.5Z M789.8 337.5L792.8 336.0L794.6 340.5L791.9 339.6Z M793.7 343.5L797.3 346.5L795.2 349.8Z M787.7 348.0L795.8 346.5L798.8 351.1L792.8 354.1L787.7 353.2Z M796.1 354.1L800.3 352.6L799.1 358.6Z M804.9 349.5L813.9 351.1L821.4 354.1L826.0 358.6L819.9 358.0L812.4 356.2L805.8 354.4Z M782.2 390.3L785.2 379.7L792.8 370.7L800.3 366.1L804.9 363.1L810.9 364.6L812.4 369.2L816.9 363.1L819.9 369.2L824.5 376.7L828.1 382.7L827.5 390.3L823.0 397.8L816.9 397.8L810.9 394.8L804.9 390.3L797.3 387.3L789.8 390.3L782.2 391.8Z M819.0 401.7L822.1 402.3L820.8 405.4Z M853.1 394.8L856.1 397.8L855.2 402.3L852.2 403.8L854.0 399.3Z M851.6 404.4L848.6 408.4L845.6 409.9L847.1 406.9L850.1 403.8Z M423.0 502.8L424.0 503.2L435.7 506.1L443.5 507.1L450.4 499.3L459.2 495.4L465.0 490.5L474.8 486.6L487.5 482.7L498.2 483.7L509.9 488.9L518.7 487.2L517.4 478.2L521.7 475.9L533.4 478.8L543.1 482.1L549.0 477.8L553.9 478.8L551.0 472.0L553.9 462.2L567.6 464.1L567.6 477.8L568.9 486.6L578.3 495.4L586.1 502.8L597.8 505.2L609.5 493.8L617.4 489.5L638.8 481.7L700.0 448.5L732.0 466.6L740.5 459.2L751.1 456.0L759.7 453.9L770.3 456.6L778.8 455.3L787.4 458.1L800.1 456.0L810.8 457.0L821.5 461.3L832.1 466.6L842.8 470.9L849.2 475.2L847.0 481.6L841.7 487.9L840.6 495.4L842.3 502.9L847.0 501.4L860.2 502.9L864.1 502.9L864.1 559.3L401.7 559.3Z" fill="#ececec" filter="url(#rough)"/><path d="M470.5 227.3L471.0 254.2L474.7 256.7L478.5 261.6L482.7 266.6 M490.9 278.3L514.5 278.3 M770.5 279.6L778.7 276.6L786.1 271.4L793.6 269.9L799.5 275.9L804.0 283.3L799.5 290.1L790.6 287.1L784.6 291.5L776.4 290.8 M804.0 283.3L808.5 276.6L813.7 273.7L816.7 266.2 M799.5 290.1L802.5 296.0L807.0 294.5" fill="none" stroke="#c9c9c9" stroke-width="0.6"/><circle cx="642.2" cy="347.2" r="146.4" fill="#fff" opacity="0.85"/><circle cx="642.2" cy="347.2" r="145.4" fill="#dfe3e8"/><path d="M642.2 347.2L642.20 202.40A144.8 144.8 0 0 1 719.57 224.81Z" fill="#4e79a7"/><path d="M642.2 347.2L718.93 224.40A144.8 144.8 0 0 1 776.27 292.49Z" fill="#76a2c5"/><path d="M642.2 347.2L775.98 291.79A144.8 144.8 0 0 1 778.35 396.49Z" fill="#a0cbe8"/><path d="M642.2 347.2L778.61 395.77A144.8 144.8 0 0 1 746.89 447.24Z" fill="#f28e2b"/><path d="M642.2 347.2L747.41 446.69A144.8 144.8 0 0 1 644.47 491.98Z" fill="#f8a95e"/><path d="M642.2 347.2L645.23 491.97A144.8 144.8 0 0 1 506.84 398.62Z" fill="#ffbe7d"/><path d="M642.2 347.2L507.11 399.33A144.8 144.8 0 0 1 642.20 202.40Z" fill="#72b768"/><path d="M642.2 347.2L642.20 245.90A101.3 101.3 0 0 1 737.45 381.68Z" fill="#4e79a7"/><path d="M642.2 347.2L737.63 381.18A101.3 101.3 0 0 1 547.50 383.17Z" fill="#f28e2b"/><path d="M642.2 347.2L547.69 383.67A101.3 101.3 0 0 1 642.20 245.90Z" fill="#5aa251"/><circle cx="642.2" cy="347.2" r="57.0" fill="#9a9a9a"/><circle cx="642.2" cy="347.2" r="3" fill="none" stroke="#85858f" stroke-width="1.2"/></g></svg>
<div class="abs" style="left:425px;top:540px;width:169px;height:15px;background:rgba(255,255,255,0.75)"></div>
<div class="t" style="left:429px;top:542px;font-size:10.5px;color:#555">© 2023 Mapbox © OpenStreetMap</div>
<!--/VIZ-->

<!-- ================= LEGENDS ================= -->
<!--LEGENDS-->
<div class="card" style="left:873px;top:96px;width:147px;height:222px;background:#fff"></div>
<div class="abs" style="left:874px;top:97px;width:145px;height:29px;background:#f7f7f7"></div>
<div class="t" style="left:880px;top:105.8px;font-size:11.8px;color:#6c6c6c">Sales Territory Group, ...</div>
<div class="sw" style="left:877px;top:129.1px;background:#4e79a7"></div>
<div class="lg" style="left:895px;top:128.6px">Europe, France</div>
<div class="sw" style="left:877px;top:148.2px;background:#76a1c6"></div>
<div class="lg" style="left:895px;top:147.7px">Europe, Germany</div>
<div class="sw" style="left:877px;top:167.3px;background:#a0cbe8"></div>
<div class="lg" style="left:895px;top:166.8px">Europe, United King..</div>
<div class="sw" style="left:877px;top:186.3px;background:#f28e2b"></div>
<div class="lg" style="left:895px;top:185.8px">North America, Cana..</div>
<div class="sw" style="left:877px;top:205.4px;background:#f39432"></div>
<div class="lg" style="left:895px;top:204.9px">North America, Cent..</div>
<div class="sw" style="left:877px;top:224.5px;background:#f59a3e"></div>
<div class="lg" style="left:895px;top:224.0px">North America, Nort..</div>
<div class="sw" style="left:877px;top:243.6px;background:#f8a551"></div>
<div class="lg" style="left:895px;top:243.1px">North America, Nort..</div>
<div class="sw" style="left:877px;top:262.7px;background:#fbb168"></div>
<div class="lg" style="left:895px;top:262.2px">North America, Sout..</div>
<div class="sw" style="left:877px;top:281.7px;background:#ffbe7d"></div>
<div class="lg" style="left:895px;top:281.2px">North America, Sout..</div>
<div class="sw" style="left:877px;top:300.8px;background:#5fa855"></div>
<div class="lg" style="left:895px;top:300.3px">Pacific, Australia</div>
<div class="card" style="left:873px;top:324px;width:147px;height:88px;background:#fff"></div>
<div class="abs" style="left:874px;top:325px;width:145px;height:28px;background:#f7f7f7"></div>
<div class="t" style="left:880px;top:333.8px;font-size:11.8px;color:#6c6c6c">Sales Territory Group</div>
<div class="sw" style="left:877px;top:356.1px;background:#4e79a7"></div>
<div class="lg" style="left:895px;top:355.6px;font-size:12px">Europe</div>
<div class="sw" style="left:877px;top:375.1px;background:#f28e2b"></div>
<div class="lg" style="left:895px;top:374.6px;font-size:12px">North America</div>
<div class="sw" style="left:877px;top:394.3px;background:#59a14f"></div>
<div class="lg" style="left:895px;top:393.8px;font-size:12px">Pacific</div>
<svg style="left:848px;top:449.5px" width="11" height="11" viewBox="0 0 11 11" fill="none" stroke="#6a2a1c" stroke-width="0.9"><circle cx="5.3" cy="5.5" r="4.8"/><path d="M7.3 4.1A2.3 2.3 0 1 0 7.3 6.9" stroke="#5a1a12" stroke-width="1.5"/></svg>
<div class="t wm" style="left:859.5px;top:449px;font-size:12.4px;font-weight:bold;color:#5a1a12;letter-spacing:0.05px">tutorialgateway.org</div>
<!--/LEGENDS-->

</body>
</html>
